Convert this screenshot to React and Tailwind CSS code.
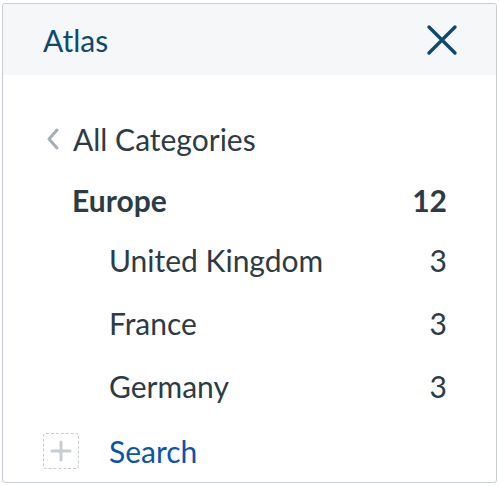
import React from 'react';

const items = [
  { name: 'United Kingdom', count: 3 },
  { name: 'France', count: 3 },
  { name: 'Germany', count: 3 },
];

export default function App() {
  return (
    <div className="w-[499px] h-[486px] bg-white pt-[3px] pl-[2px]" style={{ fontFamily: 'Lato, "Noto Sans", sans-serif' }}>
      <div className="w-[495px] h-[480px] border border-[#c7cdd1] rounded-[3px] overflow-hidden flex flex-col">
        {/* Header */}
        <div className="h-[72px] bg-[#f5f7f9] flex items-center justify-between pl-[40px] pr-[38px]">
          <span className="text-[30px] text-[#0e4a6e] mt-[1px]">Atlas</span>
          <svg width="32" height="32" viewBox="0 0 32 32" fill="none" stroke="#0e4a6e" strokeWidth="3.4" strokeLinecap="round">
            <path d="M3 3 L29 29 M29 3 L3 29" />
          </svg>
        </div>

        {/* Body */}
        <div className="flex-1 flex flex-col pt-[32px] text-[#2d3b45]">
          <div className="h-[64px] flex items-center pl-[42px]">
            <svg width="16" height="24" viewBox="0 0 16 24" fill="none" stroke="#a5afb5" strokeWidth="3" strokeLinecap="round" strokeLinejoin="round">
              <path d="M12 3 L4 12 L12 21" />
            </svg>
            <span className="ml-[12px] text-[30px]">All Categories</span>
          </div>
          <div className="h-[58px] flex items-center justify-between pl-[69px] pr-[49px] font-bold text-[30px]">
            <span>Europe</span>
            <span>12</span>
          </div>
          {items.map((it) => (
            <div key={it.name} className="h-[63px] flex items-center justify-between pl-[106px] pr-[49px] text-[30px]">
              <span>{it.name}</span>
              <span>{it.count}</span>
            </div>
          ))}
          <div className="h-[64px] flex items-center pl-[40px] pt-[2px]">
            <div className="w-[36px] h-[36px] border border-dashed border-[#c7cdd1] rounded-[3px] flex items-center justify-center">
              <svg width="22" height="22" viewBox="0 0 22 22" fill="none" stroke="#c7cdd1" strokeWidth="3" strokeLinecap="round">
                <path d="M11 2 V20 M2 11 H20" />
              </svg>
            </div>
            <span className="ml-[30px] text-[30px] text-[#0b55a8]">Search</span>
          </div>
        </div>
      </div>
    </div>
  );
}
